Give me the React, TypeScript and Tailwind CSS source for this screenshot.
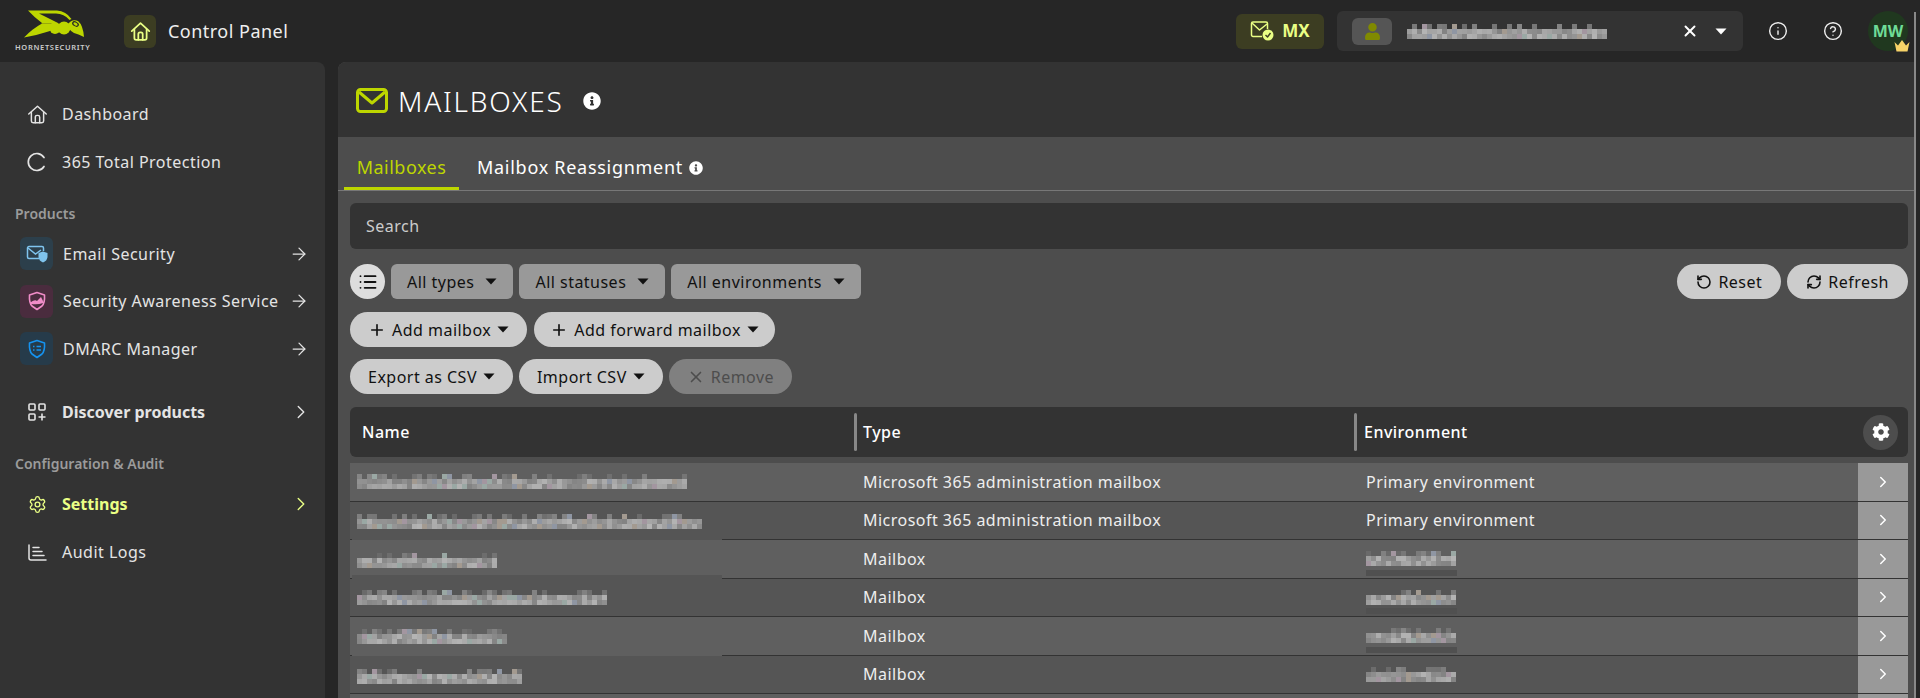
import { ArrowRight, ChevronRight, CircleHelp, Info, List, Plus, RefreshCw, RotateCcw, Settings, X } from "lucide-react";
import { FaCog, FaInfoCircle, FaUser } from "react-icons/fa";

function Mosaic({ width, seed, className = "" }: { width: number; seed: number; className?: string }) {
  const cols = Math.round(width / 5);
  let s = seed * 9301 + 49297;
  const rnd = () => {
    s = (s * 9301 + 49297) % 233280;
    return s / 233280;
  };
  const tints = ["#8f96a3", "#a39a90", "#9aa8a4", "#a396a0"];
  const cells = [];
  for (let r = 0; r < 3; r++) {
    for (let c = 0; c < cols; c++) {
      if (r === 0 && rnd() > 0.45) continue;
      const v = rnd();
      const g = r === 0 ? 105 + Math.round(v * 30) : 130 + Math.round(v * 50);
      const fill = rnd() > 0.85 ? tints[Math.floor(rnd() * 4)] : `rgb(${g},${g},${g})`;
      cells.push(<rect key={`${r}-${c}`} x={c * 5} y={r * 5} width={5} height={5} fill={fill} />);
    }
  }
  return (
    <svg width={cols * 5} height={15} shapeRendering="crispEdges" className={className}>
      {cells}
    </svg>
  );
}

function HornetLogo() {
  return (
    <svg width="62" height="28" viewBox="24 11 62 28" className="ml-[17px]" fill="#bdd600">
      <path d="M28 11.5 H57 Q66 12 71.5 20 L69.5 21 Q64 14.5 56 14.5 L39 14.5 Q48 19 57 23.5 L52 24.5 Q38 24.5 42 24 Q34 18 28 11.5Z" />
      <path d="M24 38.5 Q32 30 42 24.5 H57 Q52 30 50 32 Q38 36 24 38.5Z" />
      <ellipse cx="55" cy="29" rx="5.5" ry="6" />
      <ellipse cx="64" cy="29" rx="6.5" ry="6.5" />
      <path d="M68 25 Q72 19.5 78 22 Q83 26 84 38 Q78 35 74 34 Q68 31 68 25Z" />
      <ellipse cx="75.5" cy="25" rx="3.6" ry="2.4" transform="rotate(30 75.5 25)" fill="#262626" />
      <ellipse cx="75.5" cy="25" rx="2.3" ry="1.3" transform="rotate(30 75.5 25)" fill="#bdd600" />
    </svg>
  );
}

function HouseIcon({ size = 20, strokeWidth = 2 }: { size?: number; strokeWidth?: number }) {
  return (
    <svg width={size} height={size} viewBox="0 0 24 24" fill="none" stroke="currentColor" strokeWidth={strokeWidth} strokeLinecap="round" strokeLinejoin="round">
      <path d="M2 11.5 L12 2.5 L22 11.5" />
      <path d="M5 9.5 V19.5 Q5 21.5 7 21.5 H17 Q19 21.5 19 19.5 V9.5" />
      <path d="M9.5 21.5 V15 Q9.5 13 11.5 13 H12.5 Q14.5 13 14.5 15 V21.5" />
    </svg>
  );
}

function MailIcon() {
  return (
    <svg width="32" height="25" viewBox="0 0 32 25" fill="none" stroke="#bdd600" strokeWidth="3" strokeLinejoin="round">
      <rect x="1.5" y="1.5" width="29" height="22" rx="3" />
      <path d="M3 4 L16 15 L29 4" />
    </svg>
  );
}

function MxIcon() {
  return (
    <svg width="24" height="20" viewBox="0 0 24 20" fill="none" stroke="currentColor" strokeWidth="1.5" strokeLinejoin="round">
      <path d="M12 15.5 H3 A1.5 1.5 0 0 1 1.5 14 V2.5 A1.5 1.5 0 0 1 3 1 H16 A1.5 1.5 0 0 1 17.5 2.5 V8" />
      <path d="M2 2 L9.5 9 L17 3" />
      <circle cx="18" cy="14" r="5.5" fill="currentColor" stroke="none" />
      <path d="M15.5 14 L17.5 16 L20.5 12" stroke="#3c3d22" strokeWidth="1.4" />
    </svg>
  );
}

function ArcIcon() {
  return (
    <svg width="20" height="20" viewBox="0 0 20 20" fill="none" stroke="#e4e4e4" strokeWidth="1.7" strokeLinecap="round">
      <path d="M17 5.5 A8.5 8.5 0 1 0 17 14.5" />
    </svg>
  );
}

function EmailSecurityIcon() {
  return (
    <svg width="22" height="18" viewBox="0 0 22 18" fill="none" stroke="#7fc4ee" strokeWidth="1.5">
      <path d="M13 13.5 H3 A1.5 1.5 0 0 1 1.5 12 V3 A1.5 1.5 0 0 1 3 1.5 H16 A1.5 1.5 0 0 1 17.5 3 V6" />
      <path d="M2 3 L9.5 9 L15 5" />
      <path d="M12.5 8 L17 6.5 L21.5 8 V12 Q21 16 17 17.5 Q13 16 12.5 12Z" fill="#7fc4ee" stroke="none" />
    </svg>
  );
}

function AwarenessIcon() {
  return (
    <svg width="18" height="20" viewBox="0 0 18 20" fill="none" stroke="#f08cc8" strokeWidth="1.6" strokeLinejoin="round">
      <path d="M9 1.5 L16.5 4 Q17 12 14 15 L9 18.5 L4 15 Q1 12 1.5 4Z" />
      <path d="M3 11 Q7 8 9 10 L13 6 L15 10 V12 Q10 14 3 13Z" fill="#f08cc8" stroke="none" />
    </svg>
  );
}

function DmarcIcon() {
  return (
    <svg width="18" height="20" viewBox="0 0 18 20" fill="none" stroke="#1593f0" strokeWidth="1.6" strokeLinejoin="round">
      <path d="M9 1.5 L16.5 4 Q17 12 14 15 L9 18.5 L4 15 Q1 12 1.5 4Z" />
      <path d="M5 7.5 H6.5 M8.5 7.5 H13 M5 11 H6.5 M8.5 11 H13" strokeWidth="1.4" />
    </svg>
  );
}

function DiscoverIcon() {
  return (
    <svg width="18" height="18" viewBox="0 0 18 18" fill="none" stroke="#e4e4e4" strokeWidth="1.6">
      <rect x="1" y="1" width="6" height="6" rx="1" />
      <rect x="11" y="1" width="6" height="6" rx="1" />
      <rect x="1" y="11" width="6" height="6" rx="1" />
      <path d="M14 10.5 V17.5 M10.5 14 H17.5" />
    </svg>
  );
}

function AuditIcon() {
  return (
    <svg width="19" height="17" viewBox="0 0 19 17" fill="none" stroke="#e4e4e4" strokeWidth="1.5" strokeLinecap="round">
      <path d="M1 1 V14 Q1 16 3 16 H18" />
      <path d="M5 3.5 H11 M5 7.5 H14 M5 11.5 H16" />
    </svg>
  );
}

function Crown() {
  return (
    <svg width="18" height="13" viewBox="0 0 18 13" fill="#f7d368" className="absolute left-[25px] top-[28px]">
      <path d="M1.5 3 L5 6.5 L9 1 L13 6.5 L16.5 3 L14.5 12.5 H3.5Z" />
    </svg>
  );
}

function Caret({ className = "" }: { className?: string }) {
  return (
    <svg width="12" height="7" viewBox="0 0 12 7" fill="currentColor" className={className}>
      <path d="M0.5 0.5 H11.5 L6 6.5Z" />
    </svg>
  );
}

function NavItem({ icon, label, bold, active, trailing }: { icon: React.ReactNode; label: string; bold?: boolean; active?: boolean; trailing?: React.ReactNode }) {
  return (
    <div className={`flex h-12 items-center pr-[19px] ${active ? "text-[#eaff85]" : "text-[#e4e4e4]"}`}>
      <div className="flex w-[62px] justify-center pl-[12px]">{icon}</div>
      <span className={`flex-1 text-[16px] ${bold ? "font-bold tracking-normal" : ""}`}>{label}</span>
      {trailing}
    </div>
  );
}

function ProductItem({ icon, tile, label }: { icon: React.ReactNode; tile: string; label: string }) {
  return (
    <div className="flex h-[47.5px] items-center pl-[20px] pr-[19px] text-[#e4e4e4]">
      <div className={`mr-[10px] flex h-[33px] w-[33px] items-center justify-center rounded-md ${tile}`}>{icon}</div>
      <span className="flex-1 whitespace-nowrap text-[16px]">{label}</span>
      <ArrowRight size={20} strokeWidth={1.5} className="-mr-[3px]" />
    </div>
  );
}

function SectionLabel({ children, className = "" }: { children: React.ReactNode; className?: string }) {
  return <div className={`flex h-5 items-center pl-[15px] text-[14px] font-semibold tracking-normal text-[#9b9b9b] ${className}`}>{children}</div>;
}

function FilterButton({ label }: { label: string }) {
  return (
    <button className="flex h-[35px] items-center gap-[11px] rounded-md bg-[#999999] px-[16px] text-[16px] text-[#111111]">
      {label}
      <Caret />
    </button>
  );
}

function PillButton({ icon, label, caret, className = "" }: { icon?: React.ReactNode; label: string; caret?: boolean; className?: string }) {
  return (
    <button className={`flex h-[35px] items-center gap-[6px] rounded-full bg-[#cccccc] text-[16px] text-[#111111] ${className}`}>
      {icon}
      {label}
      {caret && <Caret />}
    </button>
  );
}

type Row = {
  type: string;
  env?: string;
  nameWidth: number;
  mosaicTop: number;
  patchTop: number;
  patchHeight: number;
  patchColor: string;
};

const rows: Row[] = [
  { type: "Microsoft 365 administration mailbox", env: "Primary environment", nameWidth: 330, mosaicTop: 11, patchTop: 0, patchHeight: 36, patchColor: "bg-[#5f5f5f]" },
  { type: "Microsoft 365 administration mailbox", env: "Primary environment", nameWidth: 345, mosaicTop: 12.5, patchTop: 1.5, patchHeight: 40, patchColor: "bg-[#555555]" },
  { type: "Mailbox", nameWidth: 140, mosaicTop: 13, patchTop: 1.5, patchHeight: 30, patchColor: "bg-[#5f5f5f]" },
  { type: "Mailbox", nameWidth: 250, mosaicTop: 11.5, patchTop: -4, patchHeight: 41, patchColor: "bg-[#555555]" },
  { type: "Mailbox", nameWidth: 150, mosaicTop: 12, patchTop: 3, patchHeight: 36, patchColor: "bg-[#5f5f5f]" },
  { type: "Mailbox", nameWidth: 165, mosaicTop: 13.5, patchTop: 3, patchHeight: 32, patchColor: "bg-[#555555]" },
];

function TableRow({ row, index }: { row: Row; index: number }) {
  const shade = index % 2 === 0 ? "bg-[#5f5f5f]" : "bg-[#555555]";
  return (
    <div className={`relative grid h-[38.5px] grid-cols-[513px_503px_1fr_50px] items-center border-b border-[#333333] text-[16px] text-[#eeeeee] ${shade}`}>
      <div className={`absolute left-[2px] w-[370px] pl-[5px] ${row.patchColor}`} style={{ top: row.patchTop, height: row.patchHeight, paddingTop: row.mosaicTop - row.patchTop }}>
        <Mosaic width={row.nameWidth} seed={index + 3} className="block" />
      </div>
      <div />
      <div>{row.type}</div>
      {row.env ? (
        <div>{row.env}</div>
      ) : (
        <div className="relative">
          {index > 2 && <div className="absolute left-0 top-[-20px] h-[6px] w-[91px] bg-[#505050]" />}
          <Mosaic width={90} seed={index + 20} className="block" />
        </div>
      )}
      <div className="flex h-full items-center justify-center bg-[#999999] text-white">
        <ChevronRight size={18} strokeWidth={2} />
      </div>
    </div>
  );
}

export default function App() {
  return (
    <div className="relative flex h-[698px] w-[1920px] flex-col overflow-hidden bg-[#262626] font-['Noto_Sans',sans-serif] tracking-[0.03em]">
      <header className="flex h-[62px] items-center">
        <div className="flex w-[124px] flex-col pl-[7px] pt-[2px]">
          <HornetLogo />
          <span className="mt-[4px] whitespace-nowrap pl-[8px] text-[7.5px] font-semibold tracking-[0.09em] text-[#cccccc]">HORNETSECURITY</span>
        </div>
        <div className="flex h-[33px] w-[32px] items-center justify-center rounded-md bg-[#3c3d22] text-[#eaff85]">
          <HouseIcon size={21} />
        </div>
        <span className="ml-[12px] pt-[1px] text-[18px] text-[#eeeeee]">Control Panel</span>
        <div className="flex-1" />
        <div className="flex h-[35px] w-[88px] items-center justify-center gap-[8px] rounded-md bg-[#3c3d22] text-[17px] font-bold tracking-normal text-[#eaff85]">
          <MxIcon />
          MX
        </div>
        <div className="ml-[13px] flex h-10 w-[406px] items-center rounded-md bg-[#333333] pl-[15px] pr-[14px]">
          <div className="flex h-[27px] w-[40px] items-center justify-center rounded-md bg-[#555555] text-[#808a00]">
            <FaUser size={17} />
          </div>
          <Mosaic width={200} seed={41} className="ml-[15px]" />
          <X size={18} strokeWidth={2.6} className="ml-[74px] text-white" />
          <Caret className="ml-[16px] text-white" />
        </div>
        <Info size={20} strokeWidth={1.7} className="ml-[25px] text-[#eeeeee]" />
        <CircleHelp size={20} strokeWidth={1.7} className="ml-[35px] text-[#eeeeee]" />
        <div className="relative ml-[25px] mr-[12px] flex h-10 w-10 items-center justify-center rounded-full bg-[#20381f] text-[16px] font-bold tracking-normal text-[#6fdc97]">
          MW
          <Crown />
        </div>
      </header>

      <div className="flex min-h-0 flex-1 gap-[13px] pr-[6px]">
        <aside className="w-[325px] rounded-tr-lg bg-[#333333] pt-[28px]">
          <NavItem icon={<HouseIcon size={21} strokeWidth={1.7} />} label="Dashboard" />
          <NavItem icon={<ArcIcon />} label="365 Total Protection" />
          <SectionLabel className="mb-[7px] mt-[17px]">Products</SectionLabel>
          <ProductItem icon={<EmailSecurityIcon />} tile="bg-[#2c3f4b]" label="Email Security" />
          <ProductItem icon={<AwarenessIcon />} tile="bg-[#4a2c3e]" label="Security Awareness Service" />
          <ProductItem icon={<DmarcIcon />} tile="bg-[#263b4a]" label="DMARC Manager" />
          <div className="mt-[15.5px]">
            <NavItem icon={<DiscoverIcon />} label="Discover products" bold trailing={<ChevronRight size={22} strokeWidth={1.5} className="-mr-[6px]" />} />
          </div>
          <SectionLabel className="mb-[7px] mt-[17px]">Configuration &amp; Audit</SectionLabel>
          <NavItem icon={<Settings size={19} strokeWidth={1.7} />} label="Settings" bold active trailing={<ChevronRight size={22} strokeWidth={1.5} className="-mr-[6px]" />} />
          <NavItem icon={<AuditIcon />} label="Audit Logs" />
        </aside>

        <main className="min-w-0 flex-1 overflow-hidden rounded-tl-lg bg-[#4d4d4d]">
          <div className="flex h-[75px] items-center bg-[#333333] pl-[18px] pt-[2px]">
            <MailIcon />
            <h1 className="ml-[10px] text-[28px] font-light tracking-[1.8px] text-white">MAILBOXES</h1>
            <FaInfoCircle size={18} className="ml-[19px] text-white" />
          </div>

          <div className="flex h-[54px] items-end border-b border-[#777777] pl-[6px]">
            <div className="flex h-[50px] w-[115px] items-center justify-center border-b-[3px] border-[#bdd600] pt-[8px] text-[18px] text-[#bdd600]">Mailboxes</div>
            <div className="mb-[3px] ml-[18px] flex h-[47px] items-center pt-[8px] text-[18px] tracking-[0.04em] text-white">
              Mailbox Reassignment
              <FaInfoCircle size={14} className="ml-[6px]" />
            </div>
          </div>

          <div className="pl-[12px] pr-[6px]">
            <div className="mt-[12px] flex h-[46px] items-center rounded-md bg-[#333333] pl-[16px] text-[16px] text-[#cccccc]">Search</div>

            <div className="mt-[15px] flex items-center gap-[6px]">
              <button className="flex h-[35px] w-[35px] items-center justify-center rounded-full bg-[#dddddd] text-[#111111]">
                <List size={20} strokeWidth={2.2} />
              </button>
              <FilterButton label="All types" />
              <FilterButton label="All statuses" />
              <FilterButton label="All environments" />
              <div className="flex-1" />
              <PillButton icon={<RotateCcw size={16} strokeWidth={2.4} />} label="Reset" className="px-[19px]" />
              <PillButton icon={<RefreshCw size={16} strokeWidth={2.4} />} label="Refresh" className="px-[19px]" />
            </div>

            <div className="mt-[13px] flex gap-[7px]">
              <PillButton icon={<Plus size={18} strokeWidth={2.2} />} label="Add mailbox" caret className="gap-[5px] px-[18px]" />
              <PillButton icon={<Plus size={18} strokeWidth={2.2} />} label="Add forward mailbox" caret className="gap-[5px] px-[16px]" />
            </div>

            <div className="mt-[12px] flex gap-[6px]">
              <PillButton label="Export as CSV" caret className="px-[18px]" />
              <PillButton label="Import CSV" caret className="px-[18px]" />
              <PillButton icon={<X size={18} strokeWidth={2.2} />} label="Remove" className="!bg-[#808080] px-[18px] !text-[#4d4d4d]" />
            </div>

            <div className="mt-[13px] grid h-[50px] grid-cols-[504px_500px_1fr] items-center rounded-md bg-[#333333] text-[16px] font-medium text-white">
              <div className="pl-[12px]">Name</div>
              <div className="flex h-full items-center">
                <div className="mr-[6px] h-[38px] w-[3px] rounded-sm bg-[#888888]" />
                Type
              </div>
              <div className="flex h-full items-center justify-between pr-[10px]">
                <div className="flex h-full items-center">
                  <div className="mr-[7px] h-[38px] w-[3px] rounded-sm bg-[#888888]" />
                  Environment
                </div>
                <div className="flex h-[35px] w-[35px] items-center justify-center rounded-full bg-[#4d4d4d]">
                  <FaCog size={18} />
                </div>
              </div>
            </div>

            <div className="relative mt-[6px]">
              {rows.map((row, i) => (
                <TableRow key={i} row={row} index={i} />
              ))}
              <div className="relative grid h-[38.5px] grid-cols-[1fr_50px] bg-[#5f5f5f]">
                <div />
                <div className="bg-[#999999]" />
              </div>
            </div>
          </div>
        </main>
      </div>

      <div className="absolute bottom-0 right-[4px] top-[12px] w-[2px] bg-[#888888]" />
    </div>
  );
}
